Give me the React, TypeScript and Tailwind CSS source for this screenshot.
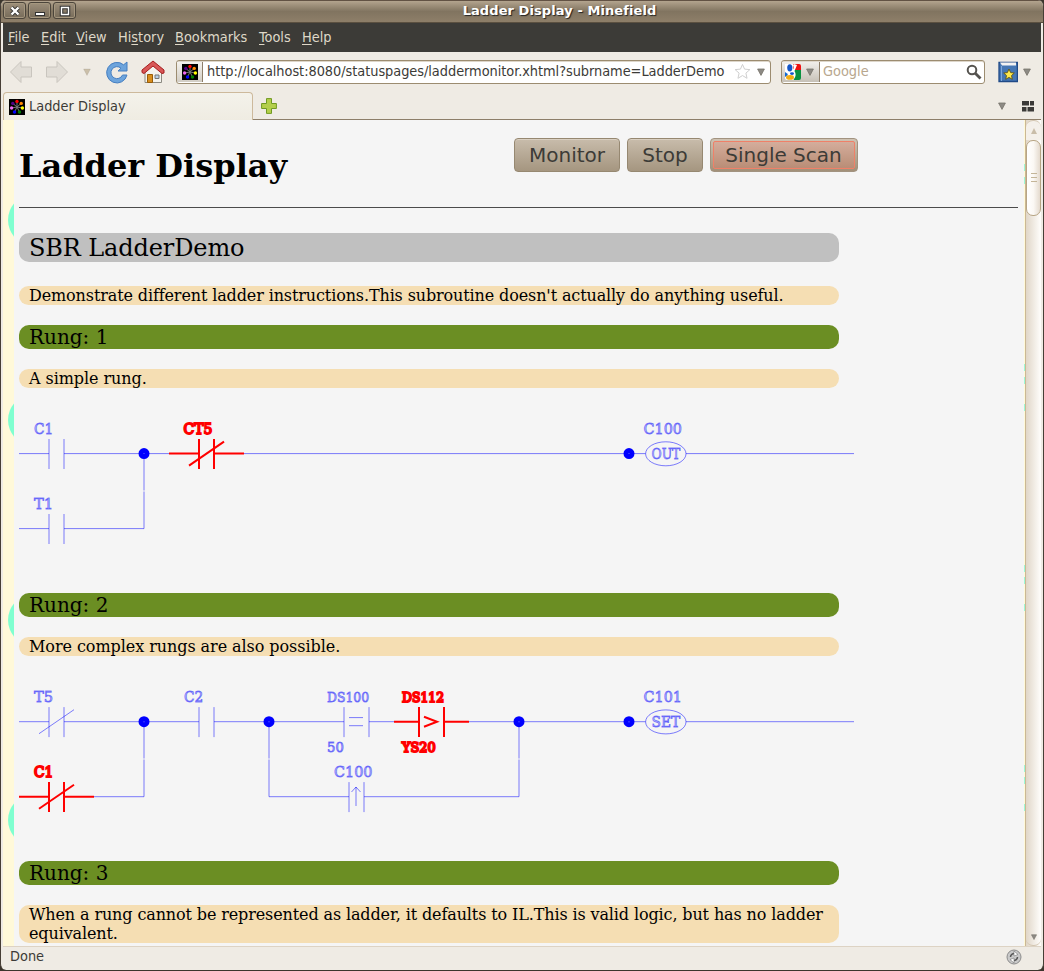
import type { ReactNode } from "react";

const wire = { stroke: "#0000ff", strokeOpacity: 0.5, strokeWidth: 1, fill: "none" };
const live = { stroke: "#ff0000", strokeOpacity: 1, strokeWidth: 2, fill: "none" };

function Label({ x, y, t, on = false, size = 16 }: { x: number; y: number; t: string; on?: boolean; size?: number }) {
  return (
    <text
      x={x}
      y={y}
      fontSize={size * 0.95}
      textLength={t.length * size * 0.6}
      lengthAdjust="spacingAndGlyphs"
      className="[font-family:'DejaVu_Serif',serif]"
      fill={on ? "#ff0000" : "#0000ff"}
      fillOpacity={on ? 1 : 0.2}
      stroke={on ? "#ff0000" : "#0000ff"}
      strokeOpacity={on ? 1 : 0.5}
      strokeWidth={on ? 1.9 : 0.9}
    >
      {t}
    </text>
  );
}

function Contact({ x, y, on = false, nc = false, gap = 15, from = 0, to = 75 }: { x: number; y: number; on?: boolean; nc?: boolean; gap?: number; from?: number; to?: number }) {
  const l = x + 37.5 - gap / 2;
  const r = x + 37.5 + gap / 2;
  return (
    <g {...(on ? live : wire)}>
      <path d={`M${x + from} ${y}H${l}M${r} ${y}H${x + to}M${l} ${y - 14.6}V${y + 15.4}M${r} ${y - 14.6}V${y + 15.4}`} />
      {nc && <path d={`M${x + 20} ${y + 12}L${x + 55} ${y - 12}`} />}
    </g>
  );
}

const Dot = ({ x, y }: { x: number; y: number }) => <circle cx={x} cy={y} r="3" fill="none" stroke="#0000ff" strokeWidth="5" />;

function Coil({ y, addr, t }: { y: number; addr: string; t: string }) {
  return (
    <g>
      <g {...wire}>
        <path d={`M629 ${y}H645.5M686 ${y}H854`} />
        <ellipse cx="665.8" cy={y + 0.2} rx="20.2" ry="12" />
      </g>
      <Dot x={629} y={y} />
      <Label x={643.5} y={y - 19.6} t={addr} />
      <Label x={651.5} y={y + 5.5} t={t} />
    </g>
  );
}

function RungOne() {
  return (
    <svg className="block h-[205px] w-[840px]" viewBox="19 388 840 205">
      <Contact x={19} y={453.6} to={150} />
      <Contact x={19} y={528.6} to={125} />
      <path {...wire} d="M144 454V490.5M144 491.5V528.6M244 453.6H629" />
      <Contact x={169} y={453.6} on nc />
      <Dot x={144} y={453.6} />
      <Label x={34} y={434} t="C1" />
      <Label x={34} y={509} t="T1" />
      <Label x={183.5} y={434} t="CT5" on />
      <Coil y={453.6} addr="C100" t="OUT" />
    </svg>
  );
}

function RungTwo() {
  return (
    <svg className="block h-[205px] w-[840px]" viewBox="19 656 840 205">
      <Contact x={19} y={721.7} nc to={125} />
      <Contact x={19} y={796.7} on nc />
      <Contact x={169} y={721.7} from={-25} to={100} />
      <Contact x={319} y={721.7} gap={25} from={-50} />
      <Contact x={394} y={721.7} on gap={25} />
      <Contact x={319} y={796.7} from={-50} to={200} />
      <path {...wire} d="M94 796.7H144V759.5M144 758.5V722M269 722V758.5M269 759.5V796.7M469 721.7H629M519 722V758.5M519 759.5V796.7M349 717.6H363M349 725.7H363M356 806V787M351.5 792L356 787L360.5 792" />
      <path {...live} d="M424 716.8L437 721.8L424 726.8" />
      <Dot x={144} y={721.7} />
      <Dot x={269} y={721.7} />
      <Dot x={519} y={721.7} />
      <Label x={34} y={702} t="T5" />
      <Label x={34} y={777} t="C1" on />
      <Label x={184} y={702} t="C2" />
      <Label x={327} y={702} t="DS100" size={14} />
      <Label x={327} y={752} t="50" size={14} />
      <Label x={402} y={702} t="DS112" size={14} on />
      <Label x={402} y={752} t="YS20" size={14} on />
      <Label x={334} y={777} t="C100" />
      <Coil y={721.7} addr="C101" t="SET" />
    </svg>
  );
}

function Favicon() {
  const dots: [number, number, string][] = [[8, 2.4, "#f00"], [12.2, 4.4, "#f80"], [13.4, 9, "#ff0"], [10.5, 13, "#008000"], [5.5, 13, "#00f"], [2.6, 9, "#e6e"], [3.8, 4.4, "#508"]];
  return (
    <svg viewBox="0 0 16 16" className="h-4 w-4 shrink-0">
      <rect width="16" height="16" fill="#000" />
      {dots.map(([x, y, c]) => (
        <g key={c}>
          <path d={`M8 8L${x} ${y}`} stroke="#777" strokeWidth="1" />
          <circle cx={x} cy={y} r="1.7" fill={c} />
        </g>
      ))}
    </svg>
  );
}

function Down({ fill = "#8d8a84", className = "" }: { fill?: string; className?: string }) {
  return (
    <svg viewBox="0 0 8 8" className={"h-2 w-2 shrink-0 " + className}>
      <path d="M.6 1H7.4L4 7.4Z" fill={fill} stroke="#77736b" strokeWidth=".8" strokeOpacity={fill === "#8d8a84" ? 1 : 0.2} />
    </svg>
  );
}

function TitleButton({ children }: { children: ReactNode }) {
  return (
    <div className="flex h-[17px] w-[23px] items-center justify-center rounded-[3px] border border-[#4c453b] bg-linear-to-b from-[#9d8f7b] to-[#776b59] shadow-[inset_0_0_0_1px_#a5977f]">
      <svg viewBox="0 0 12 12" className="h-3 w-3">{children}</svg>
    </div>
  );
}

function PushButton({ label, className, hot = false }: { label: string; className: string; hot?: boolean }) {
  return (
    <button
      className={
        "flex h-[34px] items-center justify-center rounded-[4px] border text-[20px] leading-none text-[#3c3b37] [font-family:'DejaVu_Sans',sans-serif] " +
        (hot ? "border-[#a29380] bg-linear-to-b from-[#cfc3b3] to-[#a29078] p-[2px] " : "border-[#968871] bg-linear-to-b from-[#c8bcab] to-[#a59680] shadow-[inset_0_1px_0_#d9cfc1] ") +
        className
      }
    >
      {hot ? <span className="flex h-full w-full items-center justify-center rounded-[2px] border border-[#f08068] bg-linear-to-b from-[#d4ad9c] to-[#b98d76] pr-px">{label}</span> : <span>{label}</span>}
    </button>
  );
}

const Rung = ({ n }: { n: number }) => <h3 className="h-6 w-[820px] rounded-[10px] bg-[#6b8e23] pl-[10px] text-[20px] leading-6">Rung: {n}</h3>;
const Note = ({ children, className = "tracking-[-0.06px]" }: { children: ReactNode; className?: string }) => <p className={"w-[820px] rounded-[10px] bg-[#f5deb3] px-[10px] text-[16px] leading-[19px] " + className}>{children}</p>;

export default function App() {
  const menus = [["", "F", "ile", "w-[33px]"], ["", "E", "dit", "w-[35px]"], ["", "V", "iew", "w-[42px]"], ["Hi", "s", "tory", "w-[57px]"], ["", "B", "ookmarks", "w-[84px]"], ["", "T", "ools", "w-[43px]"], ["", "H", "elp", "w-[40px]"]];
  return (
    <div className="h-[971px] w-[1044px] overflow-hidden bg-[#3b352c] text-[14.4px] text-[#3c3b37] [font-family:'DejaVu_Sans_Condensed','DejaVu_Sans',sans-serif] [font-stretch:semi-condensed]">
      <div className="flex h-[970px] flex-col overflow-hidden rounded-[6px] border-x border-[#463e35] bg-[#efebe4]">
        <header className="relative flex h-[23px] shrink-0 items-center gap-[2px] border-y border-t-[#625244] border-b-[#5b5040] bg-linear-to-b from-[#b3a48e] via-[#817460] to-[#8e7f69] pb-[2px] pl-[2px]">
          <TitleButton><path d="M2.5 2.5L9.5 9.5M9.5 2.5L2.5 9.5" stroke="#333" strokeWidth="4" /><path d="M2.5 2.5L9.5 9.5M9.5 2.5L2.5 9.5" stroke="#fff" strokeWidth="2.4" /></TitleButton>
          <TitleButton><path d="M1 7h10v4H1z" fill="#333" /><path d="M2 8h8v2H2z" fill="#fff" /></TitleButton>
          <TitleButton><path d="M2.5 2.5h7v7H2.5z" stroke="#333" strokeWidth="3.5" fill="none" /><path d="M2.5 2.5h7v7H2.5z" stroke="#fff" strokeWidth="1.4" fill="none" /></TitleButton>
          <h1 className="absolute left-0 top-[3px] w-[1117px] text-center text-[13px] font-bold leading-none text-white [font-family:'DejaVu_Sans',sans-serif] [font-stretch:normal] [text-shadow:1px_1px_1px_#222] tracking-[0.08px]">Ladder Display - Minefield</h1>
        </header>

        <nav className="mx-[2px] flex h-[29px] shrink-0 items-center bg-[#3c3b37] pl-[5px] text-[#dfd8c8]">
          {menus.map(([a, u, b, w]) => (
            <span key={u + b} className={"whitespace-nowrap " + w}>{a}<span className="underline underline-offset-2">{u}</span>{b}</span>
          ))}
        </nav>

        <div className="flex h-[39px] shrink-0 items-center pl-[8px]">
          <svg viewBox="0 0 24 24" className="h-6 w-6"><path d="M1.5 12L12 1.5V7H22.5V17H12V22.5Z" fill="#e1ddd6" stroke="#c9c5be" strokeLinejoin="round" /></svg>
          <svg viewBox="0 0 24 24" className="ml-[12px] h-6 w-6"><path d="M22.5 12L12 1.5V7H1.5V17H12V22.5Z" fill="#e1ddd6" stroke="#c9c5be" strokeLinejoin="round" /></svg>
          <Down fill="#cbbfa9" className="ml-[14px]" />
          <svg viewBox="0 0 24 24" className="ml-[14px] h-6 w-6">
            <path d="M22 2V11H13L16 8.2A6 6 0 1 0 17.5 15H22A10.3 10.3 0 1 1 18.6 4.8Z" fill="#6da4dc" stroke="#477fc0" strokeLinejoin="round" />
          </svg>
          <svg viewBox="0 0 24 24" className="ml-[12px] h-6 w-6">
            <path d="M4 12V22.5H20.5V12L12 4Z" fill="#f4f3ee" stroke="#8c8a82" />
            <path d="M6.5 14.5H11.5V22.5H6.5Z" fill="#d98e1d" stroke="#985c08" /><path d="M14 15H18V18.5H14Z" fill="#b9d0e8" stroke="#777" />
            <path d="M1 12.5V10L12 1L23 10V13L21 13.5L12 6L3 13.5Z" fill="#d85757" stroke="#a51d1d" strokeLinejoin="round" />
          </svg>
          <div className="ml-[11px] flex h-6 w-[595px] shrink-0 items-center rounded-[3px] border border-[#9c8c70] bg-white pr-[5px] shadow-[inset_0_1px_0_#ddd6ca]">
            <span className="flex h-[20px] w-[26px] shrink-0 items-center justify-center border-r border-[#8d7e69] bg-linear-to-b from-[#f4f2ee] to-[#d2cdc4]"><Favicon /></span>
            <span className="ml-1 flex-1 whitespace-nowrap tracking-[-0.04px]">http://localhost:8080/statuspages/laddermonitor.xhtml?subrname=LadderDemo</span>
            <svg viewBox="0 0 18 18" className="mr-[6px] h-[17px] w-[17px] shrink-0"><path d="M9 1.5L11.2 6.5L16.8 7L12.6 10.7L13.8 16.2L9 13.3L4.2 16.2L5.4 10.7L1.2 7L6.8 6.5Z" fill="#fff" stroke="#ccc" strokeLinejoin="round" /></svg>
            <Down />
          </div>
          <div className="ml-[10px] flex h-6 w-[204px] shrink-0 items-center rounded-[3px] border border-[#9c8c70] bg-white pr-[2px] shadow-[inset_0_1px_0_#ddd6ca]">
            <span className="flex h-[20px] w-[38px] shrink-0 items-center gap-[5px] border-r border-[#8d7e69] bg-linear-to-b from-[#f0eeea] to-[#c7c1b7] pl-[3px]">
              <svg viewBox="0 0 16 16" className="h-4 w-4">
                <path d="M8 0H14Q16 0 16 2V6H8Z" fill="#e11" /><path d="M9 6H16V14Q16 16 14 16H9Z" fill="#0a9140" />
                <path d="M0 0H8V16H2Q0 16 0 14Z" fill="#fff" /><path d="M0 8Q2 9 3 11L0 13Z" fill="#1269d3" />
                <path d="M9 0L12 1L9.5 7Q12 11 9 15L6 16V7Q10 5 8 1Z" fill="#fff" />
                <ellipse cx="4.8" cy="3.8" rx="2.6" ry="3.6" fill="#1356c8" /><ellipse cx="7" cy="9.6" rx="2" ry="1.3" fill="#1356c8" />
                <ellipse cx="5" cy="13.4" rx="4" ry="2.4" fill="#f5ad12" />
              </svg>
              <Down />
            </span>
            <span className="ml-[3px] flex-1 text-[#b8a78e]">Google</span>
            <svg viewBox="0 0 16 16" className="h-4 w-4"><circle cx="6" cy="6" r="4.3" fill="none" stroke="#55534f" strokeWidth="2" /><path d="M9 9L14.5 14.5" stroke="#55534f" strokeWidth="2.8" /></svg>
          </div>
          <svg viewBox="0 0 20 22" className="ml-[13px] h-[22px] w-5 shrink-0">
            <path d="M1 1.5H19.4V20.5H1Z" fill="#4577b4" stroke="#204a87" strokeWidth="1.3" /><path d="M2 1.5H18V4.5H4Z" fill="#f3f3f3" /><path d="M3.5 5V20" stroke="#7ea8dc" />
            <path d="M11 8L12.6 11.6L16.3 12L13.5 14.6L14.3 18.3L11 16.4L7.7 18.3L8.5 14.6L5.7 12L9.4 11.6Z" fill="#fce94f" stroke="#594b05" strokeWidth=".8" />
          </svg>
          <Down className="ml-[5px]" />
        </div>

        <div className="flex h-[29px] shrink-0 items-end pl-[2px]">
          <div className="flex h-[28px] w-[250px] items-center gap-1 rounded-t-[4px] border border-b-0 border-[#cdb99c] bg-linear-to-b from-[#f4f2eb] to-[#efece2] pl-[5px]">
            <Favicon /><span>Ladder Display</span>
          </div>
          <div className="mr-[2px] flex h-[29px] flex-1 items-center border-b border-[#8d7e69] pl-[8px] pr-[7px]">
            <svg viewBox="0 0 16 16" className="mt-px h-4 w-4"><path d="M5.5 .6H10.5V5.5H15.4V10.5H10.5V15.4H5.5V10.5H.6V5.5H5.5Z" fill="#b4cf4b" stroke="#719a22" strokeLinejoin="round" /></svg>
            <Down className="ml-auto mt-[2px]" />
            <svg viewBox="0 0 12 12" className="ml-[16px] mt-px h-3 w-3"><path d="M0 1H7V5.5H0ZM8 1H12V5.5H8ZM0 7H4.5V11.5H0ZM5.5 7H12V11.5H5.5Z" fill="#3b3a38" /></svg>
          </div>
        </div>

        <div className="mx-[2px] flex h-[826px] shrink-0 overflow-hidden">
          <svg viewBox="3 120 11 826" className="h-[826px] w-[11px] shrink-0">
            <rect x="3" y="120" width="11" height="826" fill="#fff9d9" />
            {[220, 420, 620, 820].map((y) => <circle key={y} cx="33.5" cy={y} r="25.5" fill="#7fffd0" />)}
          </svg>
          <main className="w-[1010px] shrink-0 bg-[#f5f5f5] pl-[5px] text-black [font-family:'DejaVu_Serif',serif] [font-stretch:normal]">
            <div className="flex h-[88px] w-[999px] items-start border-b border-[#4b4b4b]">
              <h2 className="w-[495px] pt-[27px] text-[32px] font-bold leading-[38px]">Ladder Display</h2>
              <div className="flex gap-[7px] pt-[18px]">
                <PushButton label="Monitor" className="w-[106px]" />
                <PushButton label="Stop" className="w-[76px]" />
                <PushButton label="Single Scan" className="w-[148px]" hot />
              </div>
            </div>
            <h2 className="mb-6 mt-[25px] h-[29px] w-[820px] rounded-[10px] bg-[#c0c0c0] pl-[10px] pt-px text-[24px] leading-[29px] tracking-[-0.12px]">SBR LadderDemo</h2>
            <Note className="tracking-[-0.12px]">Demonstrate different ladder instructions.This subroutine doesn't actually do anything useful.</Note>
            <div className="h-5" />
            <Rung n={1} />
            <div className="h-5" />
            <Note>A simple rung.</Note>
            <RungOne />
            <Rung n={2} />
            <div className="h-5" />
            <Note>More complex rungs are also possible.</Note>
            <RungTwo />
            <Rung n={3} />
            <div className="h-5" />
            <Note className="tracking-[-0.12px]">When a rung cannot be represented as ladder, it defaults to IL.This is valid logic, but has no ladder equivalent.</Note>
          </main>
          <svg viewBox="0 120 1 826" className="h-[826px] w-px shrink-0">
            <path d="M0 120H1V946H0Z" fill="#fff9d9" />
            {[164, 177, 364, 377, 404, 565, 577, 604, 765, 777, 804].map((y) => <path key={y} d={`M0 ${y}H1V${y + 7}H0Z`} fill="#9dfbd5" />)}
          </svg>
          <div className="flex w-4 shrink-0 flex-col border-l border-[#cbb894] bg-linear-to-r from-[#e0d6c8] to-[#fffefc]">
            <div className="flex h-5 items-center justify-center rounded-t-[7px] border-t border-[#d3c6b1] bg-[#f4f0ea]"><svg viewBox="0 0 6 6" className="h-[6px] w-[6px]"><path d="M3 0L6 6H0Z" fill="#c9bda9" /></svg></div>
            <div className="flex h-[76px] flex-col items-center justify-center gap-[3px] rounded-[7px] border border-[#b7a585] bg-linear-to-r from-[#fff] via-[#fbf8f4] to-[#e4dace] pb-[2px]">
              <i className="h-px w-[6px] bg-[#c4b598]" /><i className="h-px w-[6px] bg-[#c4b598]" /><i className="h-px w-[6px] bg-[#c4b598]" />
            </div>
            <div className="mt-auto flex h-[18px] items-center justify-center rounded-b-[7px] border-b border-[#d3c6b1]"><Down className="h-[6px] w-[6px]" /></div>
          </div>
        </div>

        <footer className="mx-[2px] flex h-[24px] shrink-0 items-center justify-between border-t border-[#ddd3c4] pb-[3px] pl-[7px] pr-[19px]">
          <span>Done</span>
          <svg viewBox="0 0 16 16" className="h-4 w-4">
            <circle cx="8" cy="8" r="7" fill="#c9c9c9" stroke="#8c8c8c" /><path d="M4.5 8A3.5 3.5 0 0 1 9.5 4.8M11.5 8A3.5 3.5 0 0 1 6.5 11.2" stroke="#555" strokeWidth="1.5" fill="none" />
            <path d="M8 2L12 5.5L8 7ZM8 14L4 10.5L8 9Z" fill="#fff" stroke="#777" strokeWidth=".6" />
          </svg>
        </footer>
      </div>
    </div>
  );
}
